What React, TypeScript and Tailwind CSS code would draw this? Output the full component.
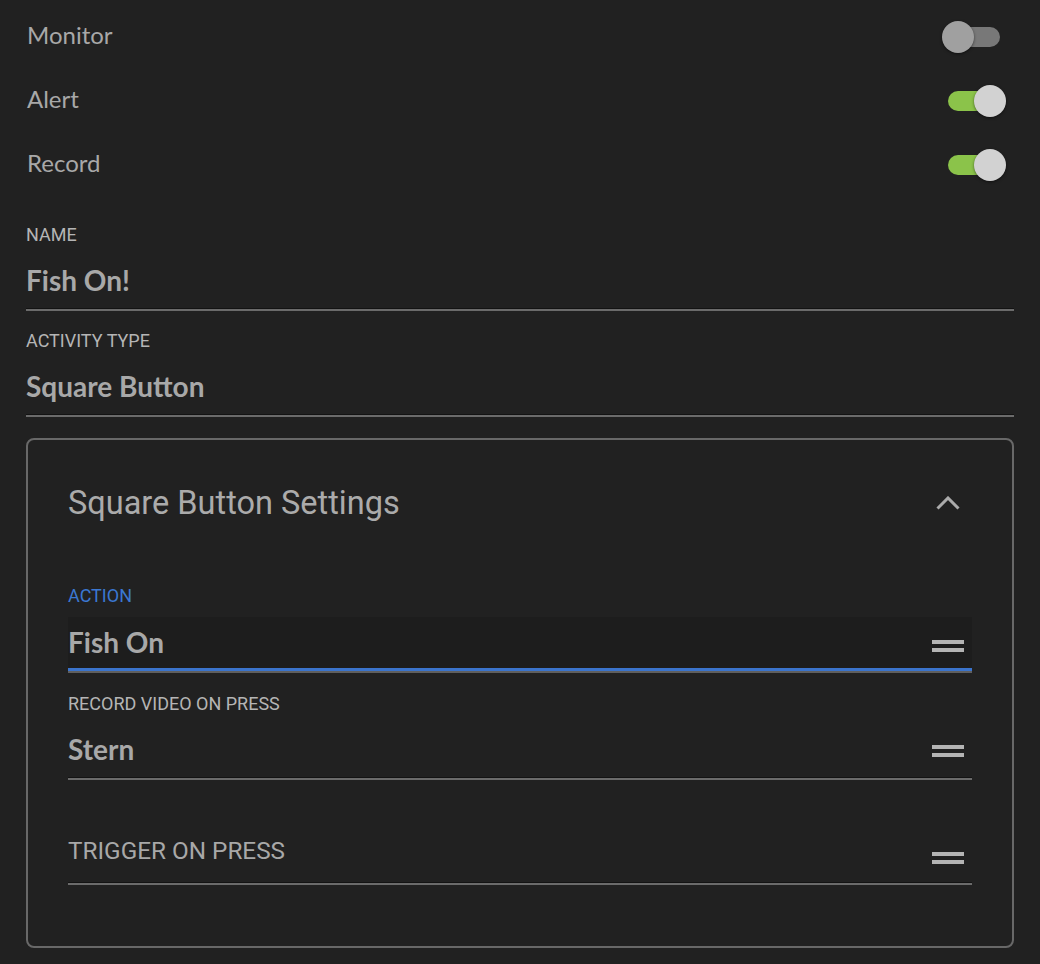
import React from 'react';

const toggles = [
    { name: 'Monitor', on: false },
    { name: 'Alert', on: true },
    { name: 'Record', on: true },
];

function Toggle({ on }: { on: boolean }) {
    return (
        <div className="relative w-16 h-8 mr-2">
            <div
                className={
                    on
                        ? 'absolute left-[6px] top-[6px] w-[52px] h-5 rounded-full bg-[#8bc34a]'
                        : 'absolute left-[6px] top-[6px] w-[52px] h-5 rounded-full bg-[#787878]'
                }
            />
            <div
                className={
                    on
                        ? 'absolute right-0 top-0 w-8 h-8 rounded-full bg-[#d2d2d2] shadow-[0_1px_3px_rgba(0,0,0,0.5)]'
                        : 'absolute left-0 top-0 w-8 h-8 rounded-full bg-[#a0a0a0] shadow-[0_1px_3px_rgba(0,0,0,0.5)]'
                }
            />
        </div>
    );
}

function Handle() {
    return (
        <div className="w-8 mr-2 flex flex-col gap-1">
            <div className="h-1 bg-[#b4b4b4]" />
            <div className="h-1 bg-[#b4b4b4]" />
        </div>
    );
}

function Underline() {
    return <div className="h-0 border-t border-t-[#131313] border-b-2 border-b-[#6b6b6b]" />;
}

const label = "font-['Roboto',sans-serif] text-[18px] leading-5 uppercase text-[#b5b5b5]";
const value = "font-['Lato',sans-serif] font-bold text-[28px] leading-9 text-[#a8a8a8]";

export default function App() {
    return (
        <div className="w-[1040px] h-[964px] bg-[#212121] px-[26px] pt-[5px] overflow-hidden">
            {/* Toggles */}
            {toggles.map((t) => (
                <div key={t.name} className="h-16 flex items-center justify-between">
                    <span className="pl-px pb-[4px] font-['Lato',sans-serif] text-[24px] text-[#a8a8a8]">
                        {t.name}
                    </span>
                    <Toggle on={t.on} />
                </div>
            ))}

            {/* Name */}
            <div className="mt-[28px]">
                <div className={label}>Name</div>
                <div className={`mt-[17px] ${value}`}>Fish On!</div>
                <div className="mt-[10px]">
                    <Underline />
                </div>
            </div>

            {/* Activity type */}
            <div className="mt-[20px]">
                <div className={label}>Activity Type</div>
                <div className={`mt-[17px] ${value}`}>Square Button</div>
                <div className="mt-[10px]">
                    <Underline />
                </div>
            </div>

            {/* Settings card */}
            <div className="mt-[21px] border-2 border-[#686868] rounded-lg px-10 pt-[39px] pb-[61px]">
                <div className="h-12 flex items-center justify-between">
                    <span className="font-['Roboto',sans-serif] text-[32.5px] text-[#ababab]">
                        Square Button Settings
                    </span>
                    <div className="w-12 h-12 flex items-center justify-center">
                        <svg width="24" height="14" viewBox="0 0 24 14" fill="none">
                            <polyline
                                points="1.5,12.5 12,2 22.5,12.5"
                                stroke="#ababab"
                                strokeWidth="3"
                            />
                        </svg>
                    </div>
                </div>

                {/* Action */}
                <div className="mt-[59px]">
                    <div className="font-['Roboto',sans-serif] text-[18px] leading-5 uppercase text-[#3b78d2]">
                        Action
                    </div>
                    <div className="mt-[11px] h-[51px] bg-[#1d1d1d] flex items-start justify-between">
                        <div className={`pt-[7px] ${value}`}>Fish On</div>
                        <div className="mt-[23px]">
                            <Handle />
                        </div>
                    </div>
                    <div className="h-0 border-t-[3px] border-t-[#3b74cc] border-b-2 border-b-[#5f5f5f]" />
                </div>

                {/* Record video */}
                <div className="mt-[21px]">
                    <div className={label}>Record Video On Press</div>
                    <div className="mt-[17px] flex items-start justify-between">
                        <div className={value}>Stern</div>
                        <div className="mt-[14px]">
                            <Handle />
                        </div>
                    </div>
                    <div className="mt-[10px]">
                        <Underline />
                    </div>
                </div>

                {/* Trigger */}
                <div className="mt-[53px]">
                    <div className="flex items-start justify-between">
                        <div className="font-['Roboto',sans-serif] text-[24.3px] leading-9 uppercase text-[#a8a8a8]">
                            Trigger On Press
                        </div>
                        <div className="mt-[19px]">
                            <Handle />
                        </div>
                    </div>
                    <div className="mt-[13px]">
                        <Underline />
                    </div>
                </div>
            </div>
        </div>
    );
}
